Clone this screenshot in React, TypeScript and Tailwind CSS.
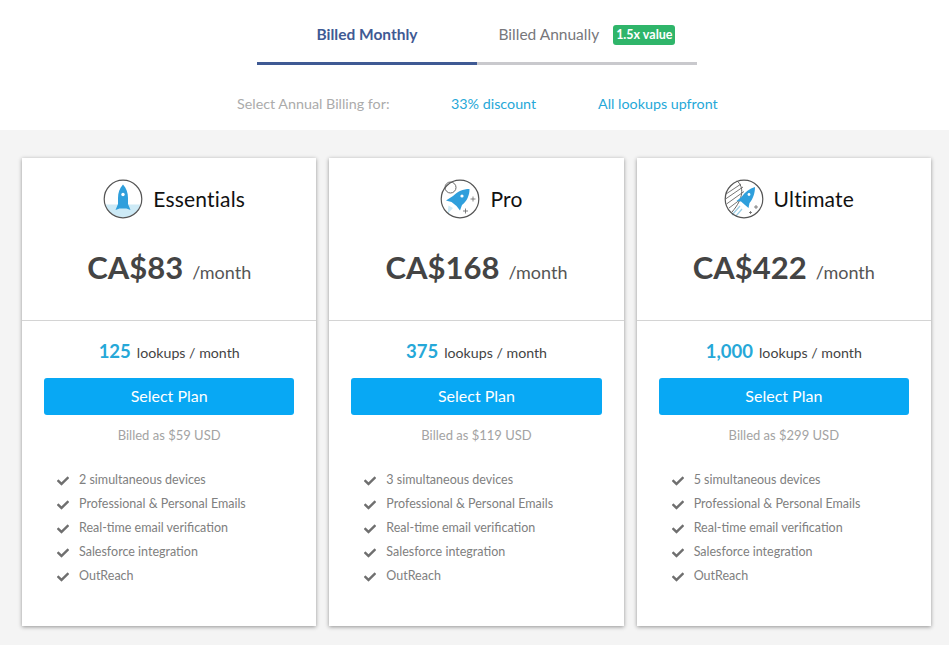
import { FaCheck } from 'react-icons/fa';

const features = ['Professional & Personal Emails', 'Real-time email verification', 'Salesforce integration', 'OutReach'];

function RocketUpIcon() {
  return (
    <svg viewBox="0 0 40 40" className="w-10 h-10">
      <circle cx="20" cy="20" r="18.8" fill="#fff" />
      <path d="M2.2 25.5 H37.8 A18.8 18.8 0 0 1 2.2 25.5 Z" fill="#cdeaf6" />
      <path d="M20 5.5 C23.5 9 25 14 25 19 L25 25 L27.5 31 L23.5 29.5 L16.5 29.5 L12.5 31 L15 25 L15 19 C15 14 16.5 9 20 5.5 Z" fill="#2f9fdc" />
      <circle cx="20" cy="15.5" r="1.7" fill="#fff" />
      <circle cx="20" cy="20" r="18.8" fill="none" stroke="#555" strokeWidth="1.2" />
    </svg>
  );
}

function RocketAngleIcon() {
  return (
    <svg viewBox="0 0 40 40" className="w-10 h-10">
      <circle cx="20" cy="20" r="18.8" fill="#fff" />
      <circle cx="10.5" cy="8.5" r="5.5" fill="#fff" stroke="#666" strokeWidth="1" />
      <path d="M13 29 L7.5 35 L8.5 26.5 Z" fill="#cdeaf6" />
      <path d="M29.5 10 C29.5 16.5 27 22 22 26 L20 31.5 L16.5 27 L11.5 23 L6 21.5 L13 17 C17.5 12.5 23 10 29.5 10 Z" fill="#2f9fdc" />
      <circle cx="22" cy="17" r="1.6" fill="#fff" />
      <path d="M33 17.5 V22.5 M30.5 20 H35.5 M25.5 29.5 V34.5 M23 32 H28" stroke="#666" strokeWidth="0.8" />
      <circle cx="20" cy="20" r="18.8" fill="none" stroke="#555" strokeWidth="1.2" />
    </svg>
  );
}

function RocketPlanetIcon() {
  return (
    <svg viewBox="0 0 40 40" className="w-10 h-10">
      <circle cx="20" cy="20" r="18.8" fill="#fff" />
      <path d="M2 15 L17 5 M1.5 20 L19 8 M2.5 25 L20 12.5 M5 29 L17 20" stroke="#777" strokeWidth="1" />
      <path d="M13 1.8 C20 8 20 19 8 33" fill="none" stroke="#666" strokeWidth="1" />
      <path d="M8 36 L16 27 M12 37 L18 30" stroke="#9ccfe6" strokeWidth="1.2" />
      <path d="M31 8 C31 14 29 20 25.5 24 L24.5 29 L21 26 L17 22.5 L12.5 22 L17.5 18 C21 13 25.5 9.5 31 8 Z" fill="#2f9fdc" />
      <circle cx="25" cy="15.5" r="1.4" fill="#fff" />
      <path d="M32 26 V30 M30 28 H34 M26.5 32 V35 M25 33.5 H28" stroke="#666" strokeWidth="0.8" />
      <circle cx="20" cy="20" r="18.8" fill="none" stroke="#555" strokeWidth="1.2" />
    </svg>
  );
}

const plans = [
  { name: 'Essentials', icon: <RocketUpIcon />, price: 'CA$83', lookups: '125', billed: '$59', devices: 2 },
  { name: 'Pro', icon: <RocketAngleIcon />, price: 'CA$168', lookups: '375', billed: '$119', devices: 3 },
  { name: 'Ultimate', icon: <RocketPlanetIcon />, price: 'CA$422', lookups: '1,000', billed: '$299', devices: 5 },
];

export default function App() {
  return (
    <div className="w-[949px] h-[645px] overflow-hidden bg-[#f4f4f4] font-['Lato',sans-serif]">
      <div className="h-[130px] bg-white pt-[21px]">
        <div className="w-[440px] ml-[257px]">
          <div className="flex h-[44px]">
            <button className="w-[220px] h-[44px] pb-[13px] border-b-[3px] border-[#3f5a94] text-[15.5px] font-bold text-[#3f5a94]">
              Billed Monthly
            </button>
            <button className="w-[220px] h-[44px] pb-[13px] border-b-[3px] border-[#c9c9cd] flex items-center justify-center gap-[14px] text-[15.5px] text-[#77777b]">
              <span>Billed Annually</span>
              <span className="h-[20px] px-[3px] rounded-[3px] bg-[#2fb56a] text-white text-[12.5px] font-bold leading-[20px]">1.5x value</span>
            </button>
          </div>
        </div>
        <div className="flex mt-[27px] h-[24px] items-center text-[14.3px]">
          <span className="ml-[237px] w-[214px] text-[#ababab]">Select Annual Billing for:</span>
          <span className="w-[147px] text-[#26a8d8]">33% discount</span>
          <span className="text-[#26a8d8]">All lookups upfront</span>
        </div>
      </div>

      <div className="grid grid-cols-3 gap-[13px] pl-[22px] pr-[18px] pt-[28px]">
        {plans.map((plan) => (
          <div key={plan.name} className="h-[468px] bg-white shadow-[0_1px_4px_rgba(0,0,0,0.4)]">
            <div className="h-[163px] border-b border-[#d4d4d4] pt-[20px]">
              <div className="flex items-center justify-center gap-[10px] h-[42px] pl-[10px]">
                {plan.icon}
                <span className="text-[21px] text-[#111] tracking-[0.2px]">{plan.name}</span>
              </div>
              <div className="flex items-baseline justify-center mt-[24px] text-[#444]">
                <span className="text-[31px] font-bold">{plan.price}</span>
                <span className="ml-[9px] text-[18px] text-[#555]">/month</span>
              </div>
            </div>

            <div className="px-[22px] pt-[17px]">
              <div className="flex items-baseline justify-center h-[24px]">
                <span className="text-[18.5px] font-bold text-[#26a8d8]">{plan.lookups}</span>
                <span className="ml-[6px] text-[14.2px] text-[#444]">lookups / month</span>
              </div>
              <button className="mt-[16px] w-full h-[37px] pb-[2px] rounded-[3px] bg-[#08a8f4] text-white text-[16px]">
                Select Plan
              </button>
              <div className="mt-[11px] text-center text-[13px] text-[#a3a3a3]">Billed as {plan.billed} USD</div>
              <ul className="mt-[23px] pl-[13px] text-[12.5px] text-[#808080]">
                {[`${plan.devices} simultaneous devices`, ...features].map((feature) => (
                  <li key={feature} className="flex items-center h-[24px]">
                    <FaCheck className="w-[12px] h-[12px] mr-[10px] text-[#6f6f6f]" />
                    {feature}
                  </li>
                ))}
              </ul>
            </div>
          </div>
        ))}
      </div>
    </div>
  );
}
